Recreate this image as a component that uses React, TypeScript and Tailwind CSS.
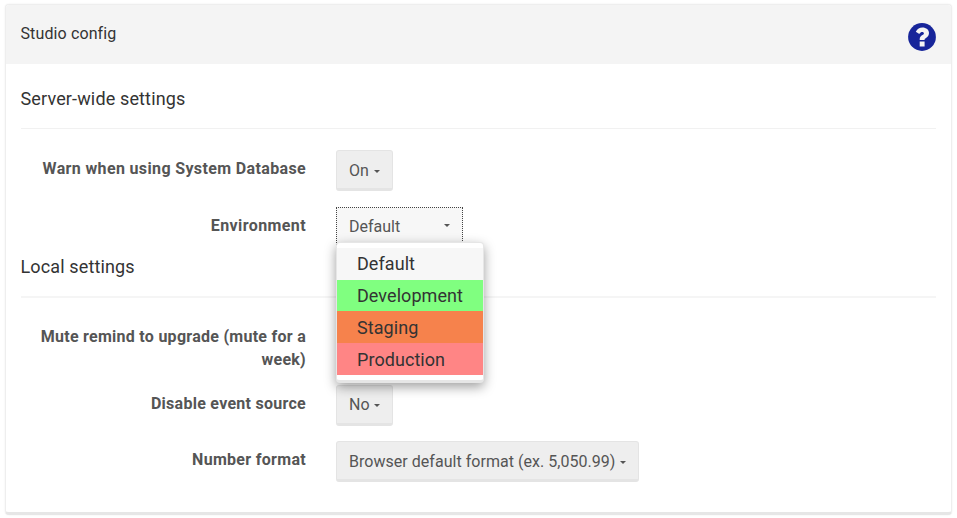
import type { ReactNode } from "react";

const environments = [
  { name: "Default", style: "bg-[#f7f7f7] h-8" },
  { name: "Development", style: "bg-[#80ff80] h-[31px]" },
  { name: "Staging", style: "bg-[#f6824c] h-8 pt-px" },
  { name: "Production", style: "bg-[#ff8585] h-8 pt-px" },
];

function Caret({ className = "mt-px" }: { className?: string }) {
  return (
    <svg width="6" height="3" viewBox="0 0 6 3" className={`shrink-0 ${className}`} fill="#555">
      <path d="M0 0H6L3 3Z" />
    </svg>
  );
}

function Field({ label, className, children }: { label: string; className: string; children?: ReactNode }) {
  return (
    <div className={`flex items-start ${className}`}>
      <div className="mr-[30px] -ml-[5px] w-[290px] shrink-0 pt-[7px] text-right text-base leading-[23px] font-bold text-[#555]">
        {label}
      </div>
      {children}
    </div>
  );
}

function DropButton({ text, className }: { text: string; className: string }) {
  return (
    <button
      className={`flex h-[41px] items-center justify-between rounded-[3px] border border-b-[3px] border-[#e4e4e4] bg-[#eee] pr-3 pl-3 text-base whitespace-nowrap text-[#555] ${className}`}
    >
      {text}
      <Caret />
    </button>
  );
}

export default function App() {
  return (
    <div className="h-[518px] w-[957px] overflow-hidden bg-white pt-1 pl-[5px] font-['Roboto',sans-serif] text-[#333]">
      <div className="h-[511px] w-[947px] rounded-[4px] border border-b-[3px] border-[#eee] border-b-[#e6e6e6] bg-white shadow-[0_0_2px_rgba(0,0,0,0.08)]">
        <header className="flex h-[59px] items-center justify-between rounded-t-[3px] bg-[#f4f4f4] pr-[14px] pl-[14.5px] text-base">
          <span className="-mt-px tracking-[0.12px]">Studio config</span>
          <svg width="30" height="28" viewBox="0 0 30 28" className="mt-[4px]">
            <circle cx="15" cy="14" r="13.9" fill="#17259a" />
            <path
              d="M8.8 8.7C10.5 5.8 12.5 4.6 15.4 4.6C19.2 4.6 22 6.9 22 10.1C22 12.4 20.8 13.9 19 14.9C18 15.5 17.6 15.9 17.6 16.6V17.1H12.7V16.1C12.7 14.1 13.8 13 15.4 12C16.5 11.4 16.9 11.1 16.9 10.4C16.9 9.6 16.2 9 15.2 9C14.1 9 13.3 9.5 12.3 10.9Z M12.7 18.5H17.6V23.4H12.7Z"
              fill="#f4f4f4"
            />
          </svg>
        </header>
        <main className="px-[15px]">
          <h2 className="-indent-[0.5px] h-[65px] border-b border-[#f1f1f1] pt-[21px] text-lg leading-[28px] tracking-[0.14px]">
            Server-wide settings
          </h2>
          <Field label="Warn when using System Database" className="mt-[21px] h-14 tracking-[0.36px]">
            <DropButton text="On" className="w-[56.5px] pt-[2px] tracking-normal" />
          </Field>
          <Field label="Environment" className="mt-px h-[46px] tracking-[0.4px]">
            <div className="relative tracking-normal">
              <button className="flex h-[40px] w-[126.5px] items-center justify-between border border-dotted border-[#444] bg-[#f7f7f7] pr-3 pl-3 text-base text-[#555]">
                Default
                <Caret className="-mt-[3px]" />
              </button>
              <ul className="absolute top-[35px] left-0 w-[148px] rounded-[4px] border border-b-[3px] border-[#e6e6e6] bg-white pt-[5px] pb-[5px] text-lg tracking-[0.06px] shadow-[0_4px_12px_rgba(0,0,0,0.38)]">
                {environments.map((item) => (
                  <li key={item.name} className={`flex items-center pl-5 ${item.style}`}>
                    {item.name}
                  </li>
                ))}
              </ul>
            </div>
          </Field>
          <h2 className="-indent-[0.5px] h-[45px] border-b-2 border-[#f5f5f5] text-lg leading-[28px] tracking-[0.14px]">
            Local settings
          </h2>
          <Field label="Mute remind to upgrade (mute for a week)" className="mt-[20px] h-[67px] tracking-[0.27px]" />
          <Field label="Disable event source" className="h-14 tracking-[0.27px]">
            <DropButton text="No" className="w-[57px] pt-px tracking-normal" />
          </Field>
          <Field label="Number format" className="h-14 tracking-[0.3px]">
            <DropButton text="Browser default format (ex. 5,050.99)" className="w-[303px] pt-[2px] tracking-[0.03px]" />
          </Field>
        </main>
      </div>
    </div>
  );
}
